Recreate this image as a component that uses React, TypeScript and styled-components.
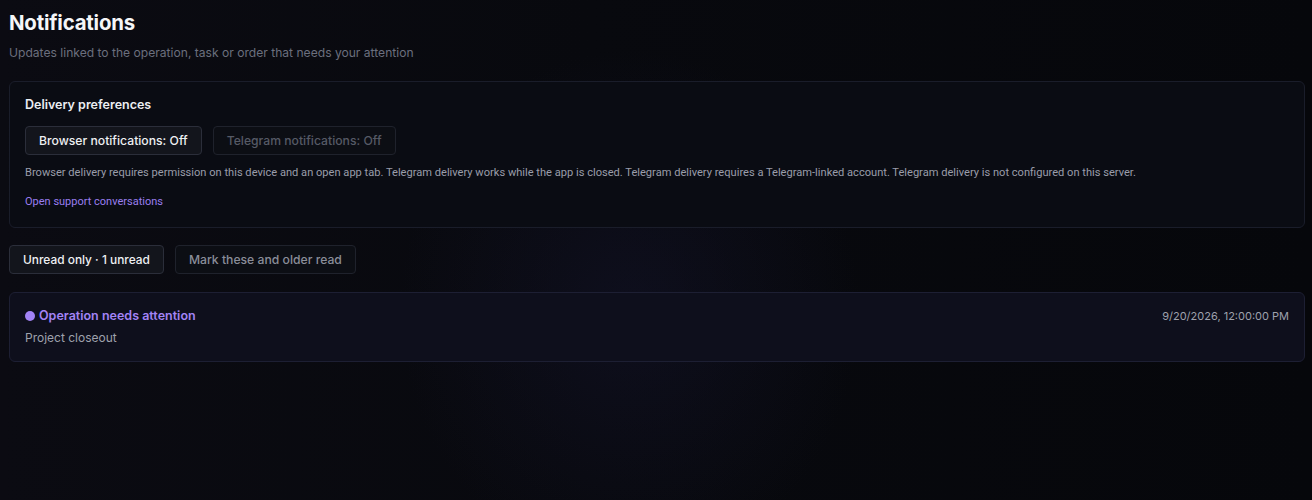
import styled, { createGlobalStyle } from 'styled-components';

const GlobalStyle = createGlobalStyle`
  html, body {
    margin: 0;
    padding: 0;
    background: #07080c;
  }
  body {
    min-height: 500px;
    font-family: Inter, "Noto Sans", sans-serif;
    color: #e5e7eb;
    background:
      radial-gradient(ellipse 230px 260px at 48% 62%, rgba(22, 22, 48, 0.45), transparent 100%),
      linear-gradient(90deg, #0b0b12 0%, #08090e 45%, #06070b 100%);
  }
`;

const Page = styled.div`
  padding: 10px 7px 40px 9px;
  display: flex;
  flex-direction: column;
`;

const Title = styled.h1`
  margin: 0;
  font-size: 20.4px;
  line-height: 26px;
  font-weight: 700;
  color: #f5f6f8;
  letter-spacing: -0.2px;
`;

const Subtitle = styled.p`
  margin: 9px 0 0;
  font-size: 12.1px;
  line-height: 16px;
  color: #6b6f7e;
`;

const Panel = styled.section<{ $tone?: 'plain' | 'accent' }>`
  border: 1px solid ${(p) => (p.$tone === 'accent' ? '#1d1f33' : '#1a1d2a')};
  background: ${(p) => (p.$tone === 'accent' ? '#0e0f1c' : '#0a0c13')};
  border-radius: 6px;
`;

const PrefsPanel = styled(Panel)`
  margin-top: 20px;
  padding: 15px 15px 17px;
  display: flex;
  flex-direction: column;
`;

const PanelHeading = styled.h2`
  margin: 0;
  font-size: 12.5px;
  line-height: 16px;
  font-weight: 600;
  color: #eceef2;
`;

const ButtonRow = styled.div<{ $gap: number }>`
  display: flex;
  gap: ${(p) => p.$gap}px;
`;

const Button = styled.button<{ $active?: boolean; $muted?: boolean; $size: number }>`
  font-family: Inter, "Noto Sans", sans-serif;
  font-size: ${(p) => p.$size}px;
  font-weight: 500;
  height: 29px;
  padding: 0 13px;
  border-radius: 4px;
  cursor: pointer;
  border: 1px solid ${(p) => (p.$active ? '#2b2e3a' : '#1f222c')};
  background: ${(p) => (p.$active ? '#13151c' : '#0c0e14')};
  color: ${(p) => (p.$active ? '#eef0f3' : p.$muted ? '#565a66' : '#8a8d99')};
`;

const PrefButtons = styled(ButtonRow)`
  margin-top: 13px;
`;

const Hint = styled.p`
  margin: 10px 0 0;
  font-family: Roboto, "Liberation Sans", sans-serif;
  font-size: 11.1px;
  line-height: 16px;
  color: #9a9daa;
`;

const SupportLink = styled.a`
  margin-top: 13px;
  font-family: Roboto, "Liberation Sans", sans-serif;
  font-size: 11px;
  line-height: 16px;
  color: #9a7ef0;
  text-decoration: none;
  align-self: flex-start;
`;

const FilterRow = styled(ButtonRow)`
  margin-top: 17px;
`;

const NoticeCard = styled(Panel)`
  margin-top: 18px;
  padding: 15px 15px 15px;
  display: flex;
  justify-content: space-between;
  align-items: flex-start;
`;

const NoticeBody = styled.div`
  display: flex;
  flex-direction: column;
  gap: 6px;
`;

const NoticeTitle = styled.div`
  display: flex;
  align-items: center;
  gap: 4px;
  font-size: 12.5px;
  line-height: 16px;
  font-weight: 600;
  color: #a283f5;
`;

const UnreadDot = styled.span`
  width: 10px;
  height: 10px;
  border-radius: 50%;
  background: #a283f5;
`;

const NoticeText = styled.div`
  font-size: 12px;
  line-height: 16px;
  color: #9ea1ac;
`;

const NoticeTime = styled.time`
  font-size: 11px;
  line-height: 16px;
  color: #9ea1ac;
`;

export default function App() {
  return (
    <>
      <GlobalStyle />
      <Page>
        <Title>Notifications</Title>
        <Subtitle>Updates linked to the operation, task or order that needs your attention</Subtitle>

        <PrefsPanel>
          <PanelHeading>Delivery preferences</PanelHeading>
          <PrefButtons $gap={11}>
            <Button $active $size={12.2}>
              Browser notifications: Off
            </Button>
            <Button $muted $size={12.2} disabled>
              Telegram notifications: Off
            </Button>
          </PrefButtons>
          <Hint>
            Browser delivery requires permission on this device and an open app tab. Telegram delivery works
            while the app is closed. Telegram delivery requires a Telegram-linked account. Telegram delivery is
            not configured on this server.
          </Hint>
          <SupportLink href='#'>Open support conversations</SupportLink>
        </PrefsPanel>

        <FilterRow $gap={11}>
          <Button $active $size={11.9}>
            Unread only · 1 unread
          </Button>
          <Button $size={12.2}>Mark these and older read</Button>
        </FilterRow>

        <NoticeCard $tone='accent'>
          <NoticeBody>
            <NoticeTitle>
              <UnreadDot />
              Operation needs attention
            </NoticeTitle>
            <NoticeText>Project closeout</NoticeText>
          </NoticeBody>
          <NoticeTime>9/20/2026, 12:00:00 PM</NoticeTime>
        </NoticeCard>
      </Page>
    </>
  );
}
